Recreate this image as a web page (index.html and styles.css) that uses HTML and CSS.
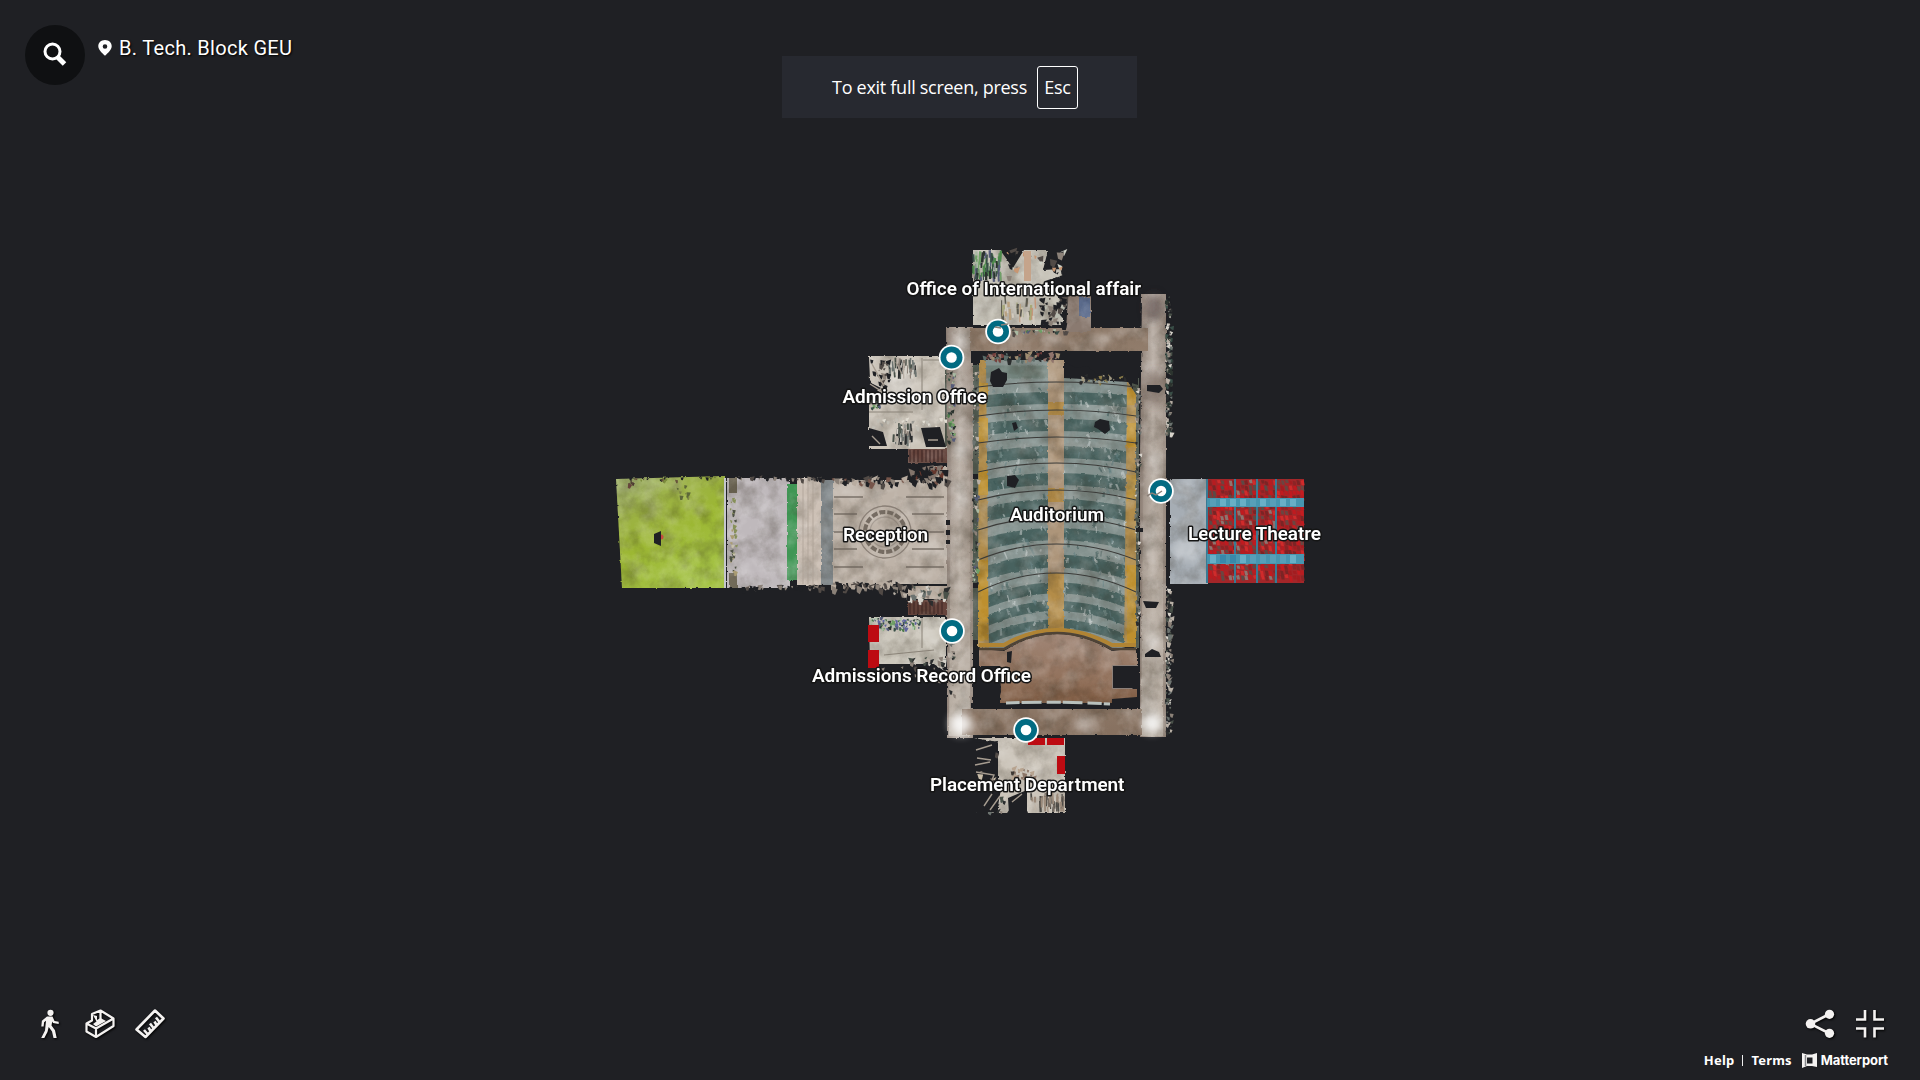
FILE: index.html
```html
<!DOCTYPE html>
<html lang="en">
<head>
<meta charset="utf-8">
<title>B. Tech. Block GEU</title>
<link rel="stylesheet" href="styles.css">
</head>
<body>
<main class="viewer">
  <svg class="plan" viewBox="0 0 1920 1080">
    <defs>
      <filter id="rough" x="-5%" y="-5%" width="110%" height="110%" color-interpolation-filters="sRGB">
        <feTurbulence type="fractalNoise" baseFrequency="0.2" numOctaves="3" seed="4" result="n"/>
        <feDisplacementMap in="SourceGraphic" in2="n" scale="2.5" xChannelSelector="R" yChannelSelector="G" result="d"/>
        <feTurbulence type="fractalNoise" baseFrequency="0.05" numOctaves="5" seed="9" result="t"/>
        <feColorMatrix in="t" type="matrix" values="0 0 0 0 .2  0 0 0 0 .17  0 0 0 0 .12  .7 0 0 0 -0.29" result="s"/>
        <feComposite in="s" in2="d" operator="in" result="shade"/>
        <feColorMatrix in="t" type="matrix" values="0 0 0 0 1  0 0 0 0 1  0 0 0 0 1  0 .5 0 0 -0.2" result="l"/>
        <feComposite in="l" in2="d" operator="in" result="light"/>
        <feMerge><feMergeNode in="d"/><feMergeNode in="shade"/><feMergeNode in="light"/></feMerge>
      </filter>
      <filter id="soft" x="-20%" y="-20%" width="140%" height="140%"><feGaussianBlur stdDeviation="4"/></filter>
      <linearGradient id="vert" x1="0" x2="1"><stop offset="0" stop-color="#8d7f75"/><stop offset=".5" stop-color="#bdb3aa"/><stop offset="1" stop-color="#96887d"/></linearGradient>
      <linearGradient id="pale" x1="0" x2="0" y1="0" y2="1"><stop offset="0" stop-color="#bcb1a5" stop-opacity="0"/><stop offset=".4" stop-color="#bcb1a5" stop-opacity=".3"/><stop offset="1" stop-color="#c4bbb0" stop-opacity=".8"/></linearGradient>
      <linearGradient id="horiz" x1="0" x2="0" y1="0" y2="1"><stop offset="0" stop-color="#8c7766"/><stop offset=".5" stop-color="#b9a898"/><stop offset="1" stop-color="#86705f"/></linearGradient>
      <linearGradient id="lawn" x1="0" x2=".5" y1="0" y2="1"><stop offset="0" stop-color="#a3b472"/><stop offset=".35" stop-color="#9cb243"/><stop offset=".6" stop-color="#9cb733"/><stop offset="1" stop-color="#a4c244"/></linearGradient>
      <linearGradient id="wood" x1="0" x2="0" y1="0" y2="1"><stop offset="0" stop-color="#a08676"/><stop offset=".7" stop-color="#91705a"/><stop offset="1" stop-color="#7b583f"/></linearGradient>
      <clipPath id="hall"><path d="M979 360H1064V378L1128 382 1136 395V645L1112 650Q1056 617 1004 650L978 648Z"/></clipPath>
    </defs>
    <g filter="url(#rough)">
      <path fill="url(#lawn)" d="M616 479 725 476V588H622Z"/>
      <path fill="#bfb9bc" d="M727 478H790V588H727Z"/>
      <path fill="#716a59" d="M729 478h8v15h-8zM729 573h8v15h-8z"/>
      <path fill="#beb3a8" d="M833 480H948V584H833Z"/>
      <path fill="#3f9654" d="M787 484h10v96h-10z"/>
      <path fill="#cdc1b6" d="M797 478h24v107h-24z"/>
      <path fill="#7f8689" d="M821 480h12v105h-12z"/>
      <path fill="#65433b" d="M908 449h40v14h-40zM908 600h40v15h-40z"/>
      <path fill="#b8aa9c" d="M930 466h18v14h-18zM908 586h40v13h-40z"/>
      <path fill="#cbc4b9" d="M869 356H947V449H869V402L884 400 870 380Z"/>
      <path fill="#cdc8bd" d="M869 617H946V672L934 664H870Z"/>
      <path fill="#c6c2b7" d="M973 250H1000L1013 268 1024 250H1048L1043 270 1063 269V275L1045 281 1063 303V325H973Z"/>
      <path fill="#cbc4b9" d="M974 738H1065V813H1028L1021 794 1007 813H998V742Z"/>
      <path fill="#a6adb4" d="M1170 479h38v105h-38z"/>
      <path fill="#4f594f" d="M945 370h12v76h-12zM973 365h6v275h-6zM1133 378h6v270h-6z"/>
      <path fill="url(#vert)" d="M946 327h27v43h-18v85h-8zM954 370h19v368h-26V446h7z"/>
      <path fill="url(#vert)" d="M1142 294h24v443h-26V455z"/>
      <path fill="url(#pale)" d="M1144 400h19v336h-22zM952 360h18v376h-21z"/>
      <path fill="url(#horiz)" d="M970 328h178v23H970zM962 709h180v26H962z"/>
      <path fill="#8a7a70" d="M1068 296h23v36h-25z"/><path fill="#526386" d="M1079 297h11v20h-11z"/>
      <path fill="url(#wood)" d="M979 649 1004 651Q1056 617 1112 651L1137 648V703H1000L1000 666 979 666Z"/>
      <g clip-path="url(#hall)"><path fill="#84928f" d="M970 350h170v305H970z"/><g id="rows"></g></g>
    </g>
    <g id="rails"></g>
    <g filter="url(#soft)" fill="#fff">
      <circle cx="961" cy="724" r="11" opacity=".85"/><circle cx="1152" cy="723" r="10" opacity=".85"/><circle cx="961" cy="450" r="7" opacity=".5"/><circle cx="962" cy="500" r="7" opacity=".4"/><circle cx="1154" cy="460" r="7" opacity=".35"/><circle cx="1154" cy="640" r="8" opacity=".3"/><circle cx="961" cy="340" r="6" opacity=".5"/><circle cx="900" cy="385" r="14" opacity=".35"/><circle cx="1188" cy="550" r="12" opacity=".25"/>
      <g opacity=".4"><ellipse cx="1015" cy="340" rx="12" ry="3"/><ellipse cx="1055" cy="340" rx="10" ry="3"/><ellipse cx="1100" cy="339" rx="12" ry="4"/><ellipse cx="1085" cy="722" rx="12" ry="5"/></g>
      <ellipse cx="1154" cy="308" rx="8" ry="14" fill="#4b3e3a" opacity=".6"/><ellipse cx="1154" cy="388" rx="8" ry="18" fill="#5b4c44" opacity=".5"/>
    </g>
    <g fill="none" stroke="#675e55" stroke-width="1.3">
      <path d="M834 497h29M906 497h38M834 514h23M912 514h32M834 532h20M916 532h28M834 549h23M912 549h32M834 567h29M906 567h38" opacity=".8"/>
      <circle cx="885" cy="532" r="26" opacity=".6"/><circle cx="885" cy="532" r="20" stroke-width="4" stroke-dasharray="6 2" opacity=".85"/><circle cx="885" cy="532" r="15" opacity=".3"/>
      <path d="M725 478v110" stroke="#c5c6cc" stroke-width="2"/>
      <path d="M803 480v104M808 480v104M813 480v104" stroke="#a99d93" stroke-width=".7"/>
      <path d="M869 412h44M922 358v52M923 360h20M922 618v30M884 655l50-5" stroke="#8a8378" stroke-width="1"/>
    </g>
    <g id="theatre"></g>
    <g id="debris"></g>
    <g fill="#1f2024">
      <path d="M654 534 661 531V546L654 543ZM991 372l8-4 3 4 5 1v7l-4 7h-10l-3-6zM1064 353h74v32l-10-3-4-7-12 3-6-6-9 2-10-8-10 2-13-6zM1095 422l5-3 9 2 1 9-5 4-7-5-4-2zM1007 476l8-1 4 5-4 8-8-2zM1012 423l4-1 2 6-4 3zM1147 385h13l3 4-4 4-12-2zM1143 601l16 1-3 6h-10zM1145 654l7-5 7 3 2 5h-16zM1007 652l5-1-1 12-4-1zM975 667h25l1 25-4 15h-22zM1113 666h25v23h-25zM971 703h164v5H971zM1112 699l25-2v11h-25z"/>
      <path d="M869 428l14 4 4 14h-18zM921 428l19-1 6 20h-20zM869 382l12 6-12 8zM998 741l-24 2v28h18zM974 790l28-7-5 29h-23zM1008 798l19-8v24h-18z"/>
      <path d="M946 520h4v5h-4zM946 530h4v5h-4zM946 540h4v4h-4zM973 474h5v5h-5zM973 583h5v5h-5zM971 351h7v12h-7zM1136 528h7v4h-7z"/>
    </g>
    <path d="M976 750l16-5M977 758l14 2M975 765l15-3M976 772l18 3-4 10M984 806l8-12M990 810l10-14M1012 802l10-8M872 364l12 22M870 384l16 10M896 362l6 12M872 436l8 8M928 440h10" fill="none" stroke="#a69c90" stroke-width="1.400"/>
    <path d="M1112.500 665.500h25.500M1112.500 665.500v23h20" fill="none" stroke="#8c8079"/>
    <path d="M1006 703q48-2 104 1" fill="none" stroke="#b9c1bd" stroke-width="3" stroke-dasharray="14 2 20 5"/>
    <g fill="#bd0b12"><path d="M868 625h11v17h-11zM868 650h11v18h-11zM1028 738h17v7h-17zM1047 738h17v7h-17zM1057 756h8v18h-8z"/></g>
    <g id="pins"></g>
    <path d="M1147 496l5-3 4 2 6-4M995 327l6 1M1001 325l7-1" fill="none" stroke="#8b8078" stroke-width="1.500"/>
    <g class="labels">
      <text x="906.500" y="295" textLength="234.500">Office of International affair</text>
      <text x="842.500" y="403" textLength="144.500">Admission Office</text>
      <text x="843" y="540.500" textLength="85">Reception</text>
      <text x="1010" y="521" textLength="94">Auditorium</text>
      <text x="1188" y="539.500" textLength="133">Lecture Theatre</text>
      <text x="812" y="682" textLength="219">Admissions Record Office</text>
      <text x="930" y="791" textLength="194.500">Placement Department</text>
    </g>
  </svg>

  <header class="top">
    <button class="search" aria-label="Search"><svg width="26" height="26" viewBox="0 0 26 26"><circle cx="10.500" cy="10.500" r="7.500" fill="none" stroke="#fff" stroke-width="3"/><path d="M15.500 16 22.500 23" stroke="#fff" stroke-width="5"/></svg></button>
    <svg class="marker" width="14" height="16" viewBox="0 0 14 16"><path fill="#fff" fill-rule="evenodd" d="M7 0C3 0 .3 2.800.3 6.300.3 10 4 12.800 7 15.800 10 12.800 13.700 10 13.700 6.300 13.700 2.800 11 0 7 0Zm0 4.200a2.300 2.300 0 1 1 0 4.600 2.300 2.300 0 0 1 0-4.600Z"/></svg>
    <h1 class="title">B. Tech. Block GEU</h1>
  </header>

  <div class="notice"><span>To exit full screen, press</span><kbd class="key">Esc</kbd></div>

  <footer class="bottom">
    <nav class="tools">
      <svg width="30" height="30" viewBox="0 0 30 30"><circle cx="15.500" cy="3.800" r="3.100"/><path d="M12 7.500h5.500L19.500 12l4.200.8v2.300l-5.700-1-.8-1.500-.7 4 3.500 4.700 1.700 7.700h-3.200L17 22.500l-3.300-4.500-1.200 5L9.300 29H6.200L10 21.500l1-9.800-1.900 1.600-.5 4.200H6.300l.6-5.700Z"/></svg>
      <svg width="30" height="30" viewBox="0 0 30 30"><g class="line"><path d="M1.500 14.500 7 11.500V5L15.500 1.500 28.500 9.500V17L11 28 1.500 22.500ZM1.500 14.500l9.500 5L28.500 9.500M11 19.500V28M15.500 2v9"/></g><path d="M8 6l4 1v4l3.500-2L21 12l-10 5.500-3-2.500 3.500-2.500Z"/></svg>
      <svg width="30" height="30" viewBox="0 0 30 30"><g class="line thick"><path d="M1.500 20.500 20 1.500 28.500 9.500 10.500 28Z"/><path d="m12.500 25-3.500-4M15.500 22l-2-3.500M18.500 19l-3.500-4.500M21.500 16l-2-3.500M24.500 13l-3.500-4.500"/></g></svg>
    </nav>
    <div class="right">
      <nav class="actions">
        <svg width="30" height="30" viewBox="0 0 30 30"><path d="M24.500 5 5.500 14.800 24.500 24.500" fill="none" stroke="#f4f2f1" stroke-width="2.600"/><circle cx="24.500" cy="5.300" r="4.600"/><circle cx="5.500" cy="14.800" r="4.800"/><circle cx="24.500" cy="24.300" r="4.600"/></svg>
        <svg width="30" height="30" viewBox="0 0 30 30"><path d="M10 1v9.500H1M19.500 1v9.500H29M10 28.500V19.500H1M19.500 28.500V19.500H29" fill="none" stroke="#f4f2f1" stroke-width="2.600"/></svg>
      </nav>
      <div class="legal"><a>Help</a><i class="bar"></i><a>Terms</a>
        <svg class="logo" width="15" height="15" viewBox="0 0 15 15"><path fill-rule="evenodd" d="M0 0 5 1.500H10L15 0V14L10 13H5L0 15ZM5 4.500V10.500H10.500V4.500Z"/><path d="M3.500 2v11" stroke="#85868a" stroke-width="1.500"/></svg><b class="brand">Matterport</b></div>
    </div>
  </footer>
</main>
<script src="plan.js"></script>
</body>
</html>
```

FILE: styles.css
```css
* { box-sizing: border-box; }
body { margin: 0; background: #1f2024; color: #fff; font-family: Roboto, "Liberation Sans", sans-serif; overflow: hidden; }
.viewer { position: relative; height: 1080px; display: flex; flex-direction: column; justify-content: space-between; }
.plan { position: absolute; inset: 0; width: 1920px; height: 1080px; }
.labels text { font: 600 19px Roboto, sans-serif; fill: #fff; stroke: #151515; stroke-width: 3px; stroke-linejoin: round; paint-order: stroke; }
.top { position: relative; display: flex; align-items: flex-start; padding: 25px 0 0 25px; }
.search { width: 60px; height: 60px; border: 0; border-radius: 50%; padding: 0; background: #0f1012; display: flex; align-items: center; justify-content: center; }
.search svg { margin: 0 0 2px 0; }
.marker { margin: 15px 0 0 13px; }
.title { margin: 11px 0 0 7px; font-size: 20px; line-height: 24px; font-weight: 400; letter-spacing: .3px; text-shadow: 1px 1px 2px #000; }
.notice { position: absolute; left: 782px; top: 56px; width: 355px; height: 62px; padding-left: 50px; background: #272930; display: flex; align-items: center; font: 18px "Open Sans", "Noto Sans", sans-serif; white-space: nowrap; }
.notice span { width: 195px; letter-spacing: -.28px; }
.key { width: 41px; height: 43px; margin-left: 10px; border: 1.5px solid #fff; border-radius: 3px; display: flex; align-items: center; justify-content: center; font: inherit; letter-spacing: -.2px; }
.bottom { position: relative; display: flex; justify-content: space-between; padding: 0 32px 10px 35px; fill: #f4f2f1; }
.tools, .actions { display: flex; gap: 20px; filter: drop-shadow(1px 1px 1px #000); }
.line { fill: none; stroke: #f4f2f1; stroke-width: 2.2; stroke-linejoin: round; }
.thick { stroke-width: 2.6; }
.right { display: flex; flex-direction: column; align-items: flex-end; gap: 11px; }
.actions { margin-right: 3px; }
.legal { display: flex; align-items: center; height: 20px; font: bold 13px "Noto Sans", sans-serif; letter-spacing: .2px; }
.bar { width: 1px; height: 11px; margin: 0 8px 0 8px; background: #eee; }
.logo { margin: 0 4px 0 10px; }
.brand { font: 700 13px Inter, sans-serif; letter-spacing: -.1px; }
```

FILE: plan.js
```js
const NS = 'http://www.w3.org/2000/svg';
let seed = 17;
const rnd = () => (seed = (seed * 16807) % 2147483647) / 2147483647;
const pick = list => list[Math.floor(rnd() * list.length)];
function add(parent, tag, attrs) {
  const el = document.createElementNS(NS, tag);
  for (const k in attrs) el.setAttribute(k, attrs[k]);
  document.getElementById(parent).appendChild(el);
}
const arc = (y, s) => `M978 ${y + s}Q1056 ${y - s} 1136 ${y + s}`;

// seating bands, steps and aisles of the auditorium
[[372, 13, 0], [398, 12, 4], [425, 12, 5], [452, 12, 7], [479, 12, 8], [506, 14, 10], [534, 12, 12], [561, 13, 15], [588, 11, 18], [606, 10, 19], [624, 9, 20]]
  .forEach(([y, w, s]) => add('rows', 'path', { d: arc(y, s), fill: 'none', stroke: y < 380 ? '#71827b' : '#48625f', 'stroke-width': w }));
for (let i = 0; i < 420; i++) {
  const x = 988 + rnd() * 138, y = 385 + rnd() * 245;
  add('rows', 'path', { d: `M${x} ${y}l${rnd() * 5 - 2} ${2 + rnd() * 5}`, stroke: pick(['#a0adae', '#3a5654', '#7f9490', '#d0d6d5', '#5f7d80']), 'stroke-width': 1 + rnd() * 1.6, opacity: .55 });
}
add('rows', 'path', { d: 'M976 360h10l3 290h-13zM1127 378h11v275h-14z', fill: '#b08c4c' });
[[383, 400], [418, 442], [470, 495], [560, 640]].forEach(([a, b]) => add('rows', 'path', { d: `M978 ${a}h10v${b - a}h-10zM1127 ${a + 5}h9v${b - a}h-9z`, fill: '#bd8f2e' }));
add('rows', 'path', { d: 'M1048 360h16v280h-16z', fill: '#ad957a' });
add('rows', 'path', { d: 'M1048 402h16v13h-16zM1048 488h16v14h-16zM1048 573h16v60h-16z', fill: '#b38c48' });
[[382, 5], [410, 6], [437, 6], [463, 9], [490, 10], [517, 13], [544, 16], [573, 19]]
  .forEach(([y, s]) => add('rails', 'path', { d: arc(y, s), fill: 'none', stroke: '#3b3b39', 'stroke-width': 1.1 }));
add('rails', 'path', { d: 'M979 645L1004 645Q1056 615 1112 645L1136 645', fill: 'none', stroke: '#b08434', 'stroke-width': 4 });
add('rails', 'path', { d: 'M979 649L1004 649Q1056 617 1112 649L1136 649', fill: 'none', stroke: '#4f4335', 'stroke-width': 2.5 });

// lecture theatre seats and blue walkways
add('theatre', 'path', { d: 'M1207 479h97v104h-97z', fill: '#a32629' });
for (let x = 1208; x < 1302; x += 4) for (let y = 480; y < 580; y += 5)
  add('theatre', 'path', { d: `M${x + rnd()} ${y + rnd()}l3 ${rnd() * 2 - 1} 1 ${3 + rnd() * 3}-3 0z`, fill: pick(['#c01a1f', '#b71c20', '#8b2426', '#d02b2b', '#6b4541', '#7b2425', x < 1276 ? '#8d7570' : '#c41c20', x < 1276 ? '#5b4a46' : '#a41c20']) });
[1207, 1235, 1257, 1276].forEach(x => add('theatre', 'path', { d: `M${x} 479v104`, stroke: '#397a93', 'stroke-width': 2 }));
[[498, 9], [554, 10]].forEach(([y, h]) => {
  add('theatre', 'path', { d: `M1207 ${y}h97v${h}h-97z`, fill: '#4796b0' });
  for (let x = 1210; x < 1300; x += 10) add('theatre', 'path', { d: `M${x} ${y + 1}h6v${h - 2}h-6z`, fill: pick(['#68afc6', '#3888aa', '#579fb8']) });
});

// scattered furniture, plants and scan fragments
const mixed = ['#8b8178', '#b9b0a6', '#495149', '#2b2d2e', '#6c7370', '#d6d2ca'];
const green = ['#4e7b4c', '#6fa066', '#394e47', '#555b78', '#a9b9a2', '#2b332e'];
const dark = ['#1f2024', '#1f2024', '#8b8178', '#514a46'];
function scatter(x, y, w, h, n, size, colors) {
  for (let i = 0; i < n; i++) {
    const a = x + rnd() * w, b = y + rnd() * h, s = size * (.4 + rnd());
    add('debris', 'path', { d: `M${a} ${b}l${s} ${rnd() * s - s / 2} ${-rnd() * s * .6} ${s}-${s * .5} ${-rnd() * s * .4}z`, fill: pick(colors) });
  }
}
// long upright slivers left by furniture seen from above
function slivers(x, y, w, h, n, colors) {
  for (let i = 0; i < n; i++) {
    const l = 4 + rnd() * 8;
    add('debris', 'path', { d: `M${x + rnd() * w} ${y + rnd() * (h - l)}l${rnd() * 2 - 1} ${l}`, stroke: pick(colors), 'stroke-width': 1 + rnd() * 1.5, fill: 'none' });
  }
}
slivers(973, 250, 28, 32, 75, ['#4e8b4c', '#6fa066', '#394e47', '#555b78', '#a9b9a2', '#2b332e']);
scatter(999, 250, 63, 26, 30, 6, dark.concat('#c79672', '#cdd0c6'));
add('debris', 'path', { d: 'M1024 251h7v30h-7z', fill: '#c5a48b' });
slivers(1001, 294, 34, 31, 34, ['#b9a180', '#c49476', '#d2cbbf', '#5c5a50', '#a6a877']);
scatter(1038, 296, 24, 28, 34, 5, dark.concat('#b9bbb0'));
slivers(888, 357, 28, 22, 45, mixed);
scatter(870, 358, 18, 30, 24, 4, dark);
scatter(870, 400, 10, 8, 16, 3, green);
slivers(893, 422, 20, 26, 45, mixed);
scatter(870, 418, 74, 8, 30, 3, ['#9b9a94', '#c1beb5', '#e1ddd2']);
scatter(869, 617, 50, 12, 90, 3, green.concat('#b3c5b0', '#5f64a0'));
scatter(880, 666, 64, 12, 30, 4, dark);
scatter(908, 657, 34, 8, 22, 4, mixed);
scatter(976, 743, 20, 40, 30, 5, dark.concat('#c9bda8'));
scatter(1008, 768, 26, 12, 28, 4, ['#8b7668', '#3e3834', '#b7a38f']);
scatter(976, 795, 28, 16, 22, 4, mixed);
slivers(1030, 792, 34, 21, 50, ['#9b8a7a', '#776c63', '#c0b4a6', '#4d4b46']);
scatter(1165, 296, 5, 138, 110, 3.5, mixed.concat('#394e47', '#2b332e'));
scatter(1165, 588, 5, 145, 110, 3.5, mixed);
scatter(947, 372, 7, 70, 50, 3, green);
scatter(972, 478, 5, 105, 50, 3, green.concat(mixed));
scatter(972, 368, 5, 90, 35, 3, mixed);
scatter(948, 640, 6, 55, 25, 3, mixed);
scatter(1134, 385, 5, 245, 75, 3, mixed);
scatter(729, 494, 6, 78, 35, 3, ['#879059', '#a99b72', '#c8c1ad', '#4d5144']);
scatter(738, 476, 85, 3, 28, 4, dark);
scatter(738, 585, 85, 3, 28, 4, dark);
scatter(830, 477, 115, 6, 60, 5, dark.concat('#b8aca0', '#76554a'));
scatter(830, 581, 80, 6, 55, 5, dark.concat('#b8aca0'));
scatter(890, 588, 18, 12, 8, 5, mixed.concat(dark));
scatter(908, 465, 36, 13, 45, 5, ['#66372d', '#1f2024', '#1f2024', '#82746b']);
scatter(908, 586, 38, 14, 25, 5, mixed);
scatter(1012, 329, 55, 3, 28, 3, green.concat(dark));
scatter(982, 352, 74, 8, 60, 4, ['#5c6c68', '#8f746c', '#76413e', '#2a2d2d', '#9d8a6f']);
scatter(1075, 374, 50, 9, 30, 3, ['#8a7b4a', '#2b2c2d', '#a39a83']);
scatter(625, 477, 90, 3, 16, 3, ['#67533b', '#7c8c3d', '#1f2024']);
scatter(628, 480, 6, 5, 8, 3, ['#67453b', '#4b3c33']);
scatter(676, 481, 12, 15, 8, 3, ['#7d8545', '#c9c5a2', '#5d6738']);
for (let x = 910; x < 946; x += 4) add('debris', 'path', { d: `M${x} 450v12M${x} 602v12`, stroke: '#3d2522', 'stroke-width': 1 });
add('debris', 'circle', { cx: 661, cy: 537, r: 2.5, fill: '#c64a3f' });

[[998, 331.5], [951.5, 357.5], [1161, 491], [952, 631], [1026, 730]].forEach(([cx, cy]) => {
  add('pins', 'circle', { cx, cy, r: 12.8, fill: '#fff' });
  add('pins', 'circle', { cx, cy, r: 11, fill: '#026b82' });
  add('pins', 'circle', { cx, cy, r: 5.3, fill: '#fff' });
});
```
